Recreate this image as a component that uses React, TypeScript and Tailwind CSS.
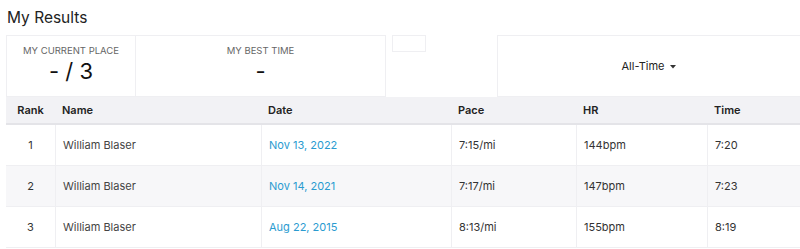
import React from 'react';

const rows = [
  { rank: 1, name: 'William Blaser', date: 'Nov 13, 2022', pace: '7:15/mi', hr: '144bpm', time: '7:20' },
  { rank: 2, name: 'William Blaser', date: 'Nov 14, 2021', pace: '7:17/mi', hr: '147bpm', time: '7:23' },
  { rank: 3, name: 'William Blaser', date: 'Aug 22, 2015', pace: '8:13/mi', hr: '155bpm', time: '8:19' },
];

const cols = 'grid grid-cols-[49px_206px_190px_125px_131px_1fr]';

export default function App() {
  return (
    <div
      className="w-[800px] h-[249px] overflow-hidden bg-white pl-[6px] text-[#333]"
      style={{ fontFamily: 'Inter, "Noto Sans", sans-serif' }}
    >
      <h2 className="text-[15.5px] leading-[20px] pt-[8px] pl-[1px] h-[35px] text-[#222]">My Results</h2>

      <div className="flex items-start">
        <div className="flex w-[380px] h-[62px] border border-[#efeff2]">
          <div className="w-[129px] flex flex-col items-center border-r border-[#efeff2]">
            <div className="text-[9.5px] leading-[12px] mt-[9px] text-[#666] uppercase">My Current Place</div>
            <div className="text-[22px] leading-[26px] mt-[1px] text-[#111]">- / 3</div>
          </div>
          <div className="flex-1 flex flex-col items-center">
            <div className="text-[9.5px] leading-[12px] mt-[9px] text-[#666] uppercase">My Best Time</div>
            <div className="text-[22px] leading-[26px] mt-[1px] text-[#111]">-</div>
          </div>
        </div>
        <div className="ml-[6px] w-[34px] h-[17px] border border-[#efeff2]" />
        <div className="ml-[71px] flex-1 h-[62px] border border-[#efeff2] border-r-0 flex items-center justify-center gap-[6px]">
          <span className="text-[11px] text-[#222]">All-Time</span>
          <svg width="6" height="4" viewBox="0 0 6 4" className="mt-[1px]">
            <path d="M0 0h6L3 3.5z" fill="#333" />
          </svg>
        </div>
      </div>

      <div className="w-[794px]">
        <div className={`${cols} h-[28px] bg-[#f2f2f5] border-b-2 border-[#e4e4e8] text-[11px] font-semibold text-[#222] items-center`}>
          <div className="text-center">Rank</div>
          <div className="pl-[7px]">Name</div>
          <div className="pl-[7px]">Date</div>
          <div className="pl-[7px]">Pace</div>
          <div className="pl-[7px]">HR</div>
          <div className="pl-[7px]">Time</div>
        </div>
        {rows.map((r, i) => (
          <div
            key={r.rank}
            className={`${cols} h-[41px] text-[11px] border-b border-[#efeff2] ${i === 1 ? 'bg-[#f7f7f9]' : 'bg-white'}`}
          >
            <div className="flex items-center justify-center text-[#333]">{r.rank}</div>
            <div className="flex items-center pl-[7px] border-l border-[#efeff2] text-[#444]">{r.name}</div>
            <div className="flex items-center pl-[7px] border-l border-[#efeff2] text-[#2a9bd0]">{r.date}</div>
            <div className="flex items-center pl-[7px] border-l border-[#efeff2] text-[#333]">{r.pace}</div>
            <div className="flex items-center pl-[7px] border-l border-[#efeff2] text-[#333]">{r.hr}</div>
            <div className="flex items-center pl-[7px] border-l border-[#efeff2] text-[#333]">{r.time}</div>
          </div>
        ))}
      </div>
    </div>
  );
}
